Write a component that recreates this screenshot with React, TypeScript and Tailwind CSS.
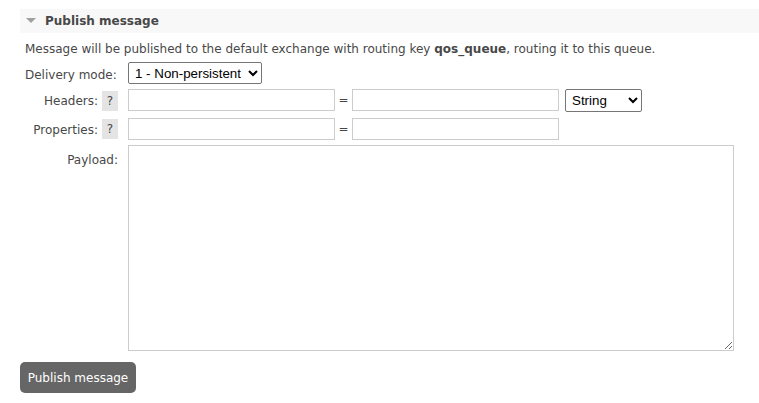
import React from "react";

export default function App() {
  const font = { fontFamily: '"DejaVu Sans", Verdana, sans-serif' };
  const arial = { fontFamily: '"Liberation Sans", Arial, sans-serif' };
  return (
    <div className="w-[759px] h-[403px] bg-white text-[#484848] text-[12px]" style={font}>
      <div className="pt-[9px] pl-[20px]">
        <div className="h-[24px] bg-[#f8f8f8] flex items-center">
          <svg width="10" height="6" viewBox="0 0 10 6" className="ml-[6px] mr-[9px]">
            <polygon points="0,0 10,0 5,5" fill="#a0a0a0" />
          </svg>
          <span className="font-bold text-[12px] text-[#484848]">Publish message</span>
        </div>
      </div>
      <div className="pl-[25px] pr-[20px]">
        <p className="mt-[9px] leading-[15px] whitespace-nowrap">
          Message will be published to the default exchange with routing key <b>qos_queue</b>, routing it to this queue.
        </p>
        <div className="flex flex-col mt-[5px]">
          <div className="flex items-center h-[22px]">
            <label className="w-[103px] shrink-0 whitespace-nowrap pt-[4px]">Delivery mode:</label>
            <select
              className="h-[22px] w-[134px] border border-[#767676] rounded-[2px] bg-white text-[13.33px] text-black px-[2px]"
              style={arial}
              defaultValue="1"
            >
              <option value="1">1 - Non-persistent</option>
              <option value="2">2 - Persistent</option>
            </select>
          </div>
          <div className="flex items-center h-[22px] mt-[5px]">
            <div className="w-[103px] shrink-0 flex items-center justify-end pr-[10px] gap-[4px] whitespace-nowrap">
              <span className="pt-[1px]">Headers:</span>
              <span className="w-[16px] h-[20px] bg-[#e4e4e4] flex items-center justify-center text-[12px] mt-[2px]">?</span>
            </div>
            <input className="h-[22px] w-[207px] border border-[#cccccc] bg-white" />
            <span className="w-[17px] text-center">=</span>
            <input className="h-[22px] w-[207px] border border-[#cccccc] bg-white" />
            <select
              className="ml-[6px] h-[23px] w-[77px] border border-[#767676] rounded-[2px] bg-white text-[13.33px] text-black px-[2px]"
              style={arial}
              defaultValue="String"
            >
              <option>String</option>
              <option>Number</option>
              <option>Boolean</option>
            </select>
          </div>
          <div className="flex items-center h-[22px] mt-[7px]">
            <div className="w-[103px] shrink-0 flex items-center justify-end pr-[10px] gap-[4px] whitespace-nowrap">
              <span className="pt-[1px]">Properties:</span>
              <span className="w-[16px] h-[20px] bg-[#e4e4e4] flex items-center justify-center text-[12px]">?</span>
            </div>
            <input className="h-[22px] w-[207px] border border-[#cccccc] bg-white" />
            <span className="w-[17px] text-center">=</span>
            <input className="h-[22px] w-[207px] border border-[#cccccc] bg-white" />
          </div>
          <div className="flex mt-[5px]">
            <label className="w-[103px] shrink-0 text-right pr-[10px] pt-[6px]">Payload:</label>
            <textarea className="w-[606px] h-[206px] border border-[#cccccc] bg-white" />
          </div>
        </div>
      </div>
      <div className="pl-[20px] mt-[11px]">
        <button
          className="h-[31px] w-[116px] bg-[#666666] text-white rounded-[5px] text-[12px]"
          style={font}
        >
          Publish message
        </button>
      </div>
    </div>
  );
}
